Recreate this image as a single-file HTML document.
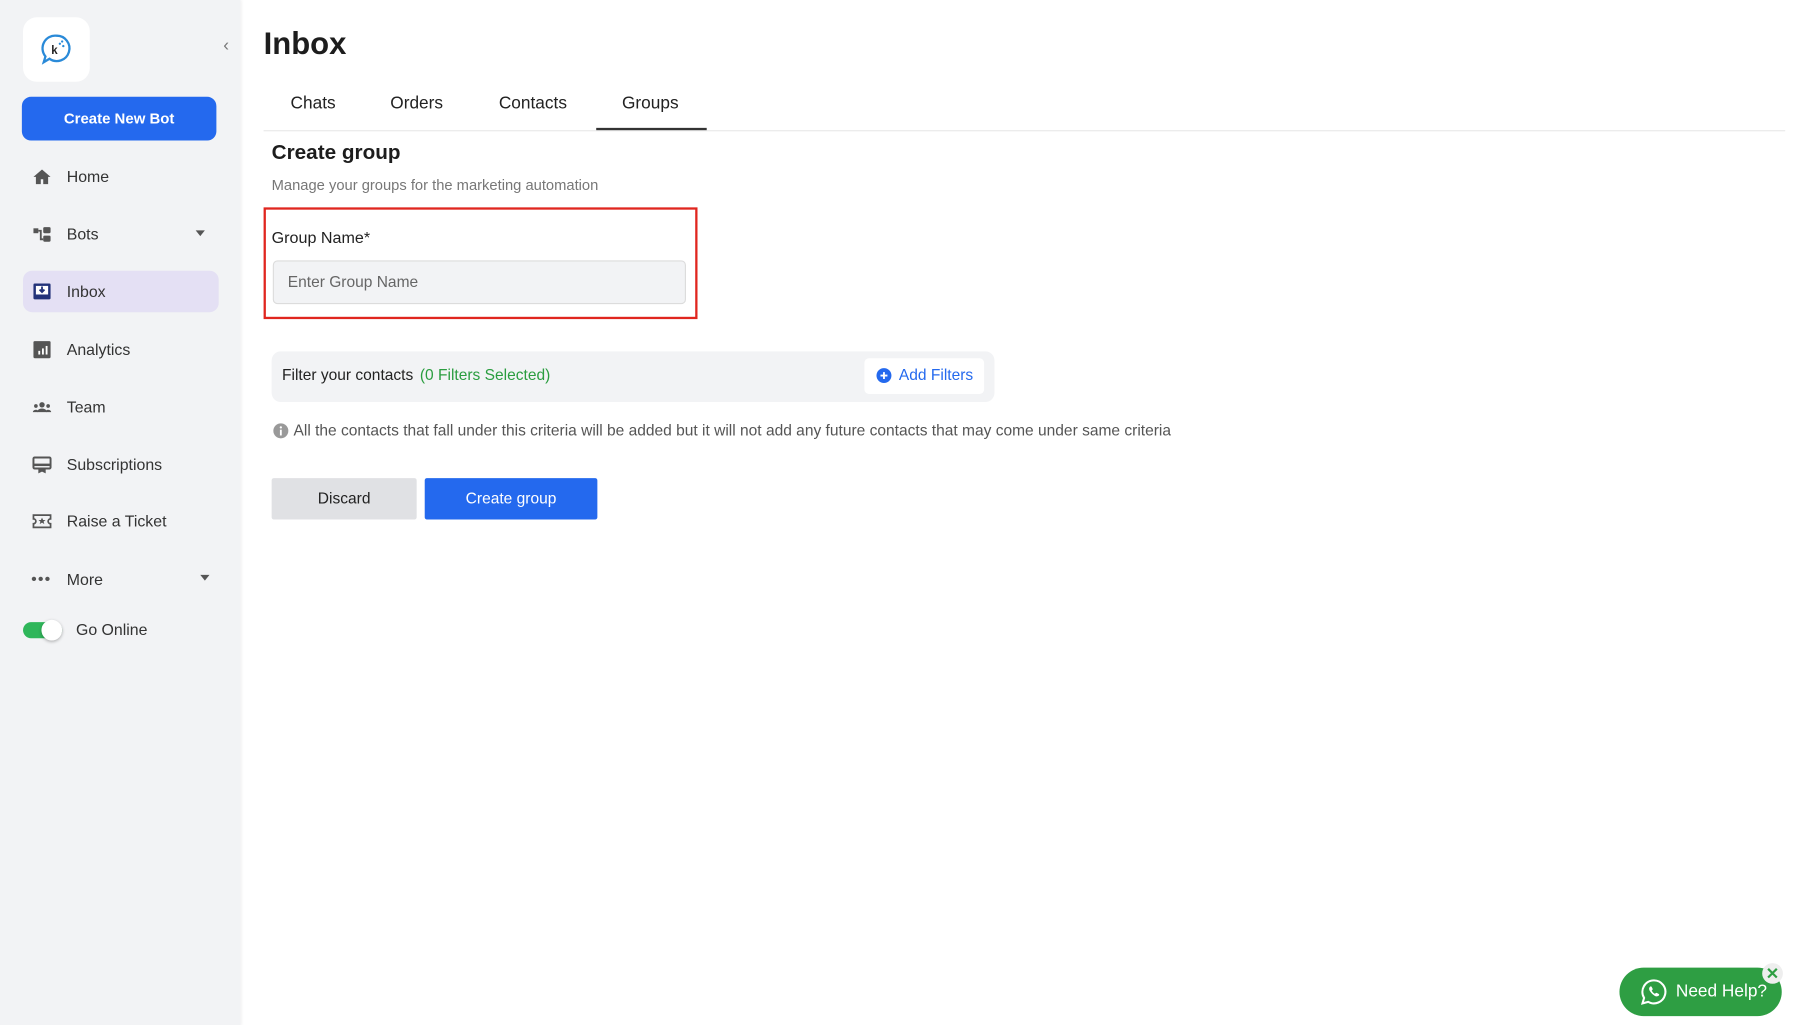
<!DOCTYPE html>
<html><head><meta charset="utf-8"><style>
*{box-sizing:border-box;margin:0;padding:0}
html,body{width:1806px;height:1020px;overflow:hidden;background:#fff;font-family:"Liberation Sans",sans-serif}
#w{position:absolute;left:0;top:0;width:1570px;height:884px;transform:scale(1.151,1.152);transform-origin:0 0}
.a{position:absolute}
.side{left:0;top:0;width:209px;height:890px;background:#f2f3f5;box-shadow:1px 0 3px rgba(0,0,0,.08)}
.nav{position:absolute;left:58px;font-size:13.8px;color:#333;line-height:16px}
.ic{position:absolute;left:28px;width:17px;height:17px}
.tab{position:absolute;top:81px;font-size:15px;color:#222;transform:translateX(-50%)}
</style></head><body><div id="w">
<div class="a side">
 <div class="a" style="left:20px;top:15px;width:58px;height:56px;background:#fff;border-radius:12px"></div>
 <svg class="a" style="left:34px;top:27px" width="30" height="30" viewBox="0 0 30 30"><path d="M15 4a11 11 0 1 1-6 20l-5 3 1.5-5A11 11 0 0 1 15 4z" fill="none" stroke="#2a8ad8" stroke-width="2"/><text x="10.5" y="20" font-size="10" font-weight="bold" font-family="Liberation Sans" fill="#222">k</text><circle cx="18" cy="11" r="1" fill="#2a8ad8"/><circle cx="21" cy="13" r="1" fill="#2a8ad8"/><circle cx="20" cy="9" r="1" fill="#2a8ad8"/></svg>
 <div class="a" style="left:194px;top:31px;color:#777;font-size:15px">&#8249;</div>
 <div class="a" style="left:19px;top:84px;width:169px;height:38px;background:#2469ee;border-radius:8px;color:#fff;font-weight:bold;font-size:13px;text-align:center;line-height:38px">Create New Bot</div>
 <div class="a" style="left:20px;top:235px;width:170px;height:36px;background:#e4e0f4;border-radius:8px"></div>
 <svg class="ic" style="top:145px" viewBox="0 0 16 16"><path d="M8 2 1 8h2v6h4v-4h2v4h4V8h2z" fill="#555"/></svg><div class="nav" style="top:146px">Home</div>
 <svg class="ic" style="top:195px" viewBox="0 0 16 16"><rect x="1" y="3" width="4" height="4" fill="#555"/><rect x="9" y="2" width="6" height="5" rx="1" fill="#555"/><rect x="9" y="9" width="6" height="5" rx="1" fill="#555"/><path d="M5 5h2v7h2" stroke="#555" stroke-width="1.5" fill="none"/></svg><div class="nav" style="top:196px">Bots</div>
 <div class="a" style="left:170px;top:200px;border:4px solid transparent;border-top:5px solid #555"></div>
 <svg class="ic" style="top:245px" viewBox="0 0 16 16"><rect x="1" y="1" width="14" height="13" rx="1" fill="#23337a"/><rect x="3" y="3" width="10" height="7" fill="#fff"/><path d="M8 3.5v4M6 6l2 2 2-2" stroke="#23337a" stroke-width="1.5" fill="none"/></svg><div class="nav" style="top:246px">Inbox</div>
 <svg class="ic" style="top:295px" viewBox="0 0 16 16"><rect x="1" y="1" width="14" height="14" rx="1" fill="#555"/><rect x="5" y="9" width="1.5" height="3" fill="#fff"/><rect x="8" y="7" width="1.5" height="5" fill="#fff"/><rect x="11" y="5" width="1.5" height="7" fill="#fff"/></svg><div class="nav" style="top:296px">Analytics</div>
 <svg class="ic" style="top:345px" viewBox="0 0 16 16"><circle cx="8" cy="6" r="2.2" fill="#555"/><path d="M4 12a4 3 0 0 1 8 0z" fill="#555"/><circle cx="3" cy="7" r="1.5" fill="#555"/><circle cx="13" cy="7" r="1.5" fill="#555"/><path d="M0.5 12a2.5 2 0 0 1 4 -1.5v1.5zM15.5 12a2.5 2 0 0 0-4-1.5v1.5z" fill="#555"/></svg><div class="nav" style="top:346px">Team</div>
 <svg class="ic" style="top:395px" viewBox="0 0 16 16"><rect x="1" y="2" width="14" height="9" rx="1" fill="none" stroke="#555" stroke-width="1.6"/><rect x="1" y="7" width="14" height="2" fill="#555"/><path d="M5 11v4l3-1.5 3 1.5v-4" fill="#555"/></svg><div class="nav" style="top:396px">Subscriptions</div>
 <svg class="ic" style="top:444px" viewBox="0 0 16 16"><path d="M1 3h14v3a2 2 0 0 0 0 4v3H1v-3a2 2 0 0 0 0-4z" fill="none" stroke="#555" stroke-width="1.4"/><path d="M8 5l.9 2h2l-1.6 1.3.6 2L8 9.1 6.1 10.3l.6-2L5.1 7h2z" fill="#555"/></svg><div class="nav" style="top:445px">Raise a Ticket</div>
 <div class="a" style="left:27px;top:494px;font-size:14px;color:#555;letter-spacing:1px">&#8226;&#8226;&#8226;</div><div class="nav" style="top:496px">More</div>
 <div class="a" style="left:174px;top:499px;border:4px solid transparent;border-top:5px solid #555"></div>
 <div class="a" style="left:20px;top:540px;width:34px;height:14px;border-radius:7px;background:#2fb65a"></div>
 <div class="a" style="left:36px;top:538px;width:18px;height:18px;border-radius:50%;background:#fff;box-shadow:0 1px 3px rgba(0,0,0,.3)"></div>
 <div class="nav" style="left:66px;top:539px">Go Online</div>
</div>
<div class="a" style="left:229px;top:23px;font-size:27px;font-weight:bold;color:#1d1d1d">Inbox</div>
<div class="tab" style="left:272px">Chats</div><div class="tab" style="left:362px">Orders</div><div class="tab" style="left:463px">Contacts</div><div class="tab" style="left:565px">Groups</div>
<div class="a" style="left:229px;top:113px;width:1322px;height:1px;background:#e8e8e8"></div>
<div class="a" style="left:518px;top:111px;width:96px;height:2px;background:#333"></div>
<div class="a" style="left:236px;top:122px;font-size:18px;font-weight:bold;color:#1d1d1d">Create group</div>
<div class="a" style="left:236px;top:153px;font-size:12.8px;color:#777">Manage your groups for the marketing automation</div>
<div class="a" style="left:229px;top:180px;width:377px;height:97px;border:2px solid #e0261f"></div>
<div class="a" style="left:236px;top:198px;font-size:14px;color:#222">Group Name*</div>
<div class="a" style="left:237px;top:226px;width:359px;height:38px;background:#f2f3f5;border:1px solid #dcdcdc;border-radius:4px;padding-left:12px;line-height:36px;font-size:13.5px;color:#666">Enter Group Name</div>
<div class="a" style="left:236px;top:305px;width:628px;height:44px;background:#f2f3f5;border-radius:8px"></div>
<div class="a" style="left:245px;top:318px;font-size:13.5px;color:#222">Filter your contacts <span style="color:#2a9d3f;margin-left:2px">(0 Filters Selected)</span></div>
<div class="a" style="left:751px;top:311px;width:104px;height:31px;background:#fff;border-radius:4px"></div>
<svg class="a" style="left:761px;top:319px" width="14" height="14" viewBox="0 0 14 14"><circle cx="7" cy="7" r="6.5" fill="#2469ee"/><path d="M7 4v6M4 7h6" stroke="#fff" stroke-width="1.6"/></svg>
<div class="a" style="left:781px;top:318px;font-size:13.5px;color:#2469ee">Add Filters</div>
<svg class="a" style="left:237px;top:367px" width="14" height="14" viewBox="0 0 14 14"><circle cx="7" cy="7" r="6.5" fill="#999"/><rect x="6.2" y="6" width="1.6" height="5" fill="#fff"/><circle cx="7" cy="4" r="1" fill="#fff"/></svg>
<div class="a" style="left:255px;top:366px;font-size:13.5px;color:#555">All the contacts that fall under this criteria will be added but it will not add any future contacts that may come under same criteria</div>
<div class="a" style="left:236px;top:415px;width:126px;height:36px;background:#e0e1e4;border-radius:2px;text-align:center;line-height:36px;font-size:13.5px;color:#222">Discard</div>
<div class="a" style="left:369px;top:415px;width:150px;height:36px;background:#2469ee;border-radius:2px;text-align:center;line-height:36px;font-size:13.5px;color:#fff">Create group</div>
<div class="a" style="left:1407px;top:840px;width:141px;height:42px;background:#2e9e43;border-radius:21px"></div>
<svg class="a" style="left:1425px;top:849px" width="24" height="24" viewBox="0 0 24 24"><path d="M12 2a10 10 0 1 1-5 18.7L2 22l1.4-4.8A10 10 0 0 1 12 2z" fill="none" stroke="#fff" stroke-width="1.8"/><path d="M8.5 7.5c.5-.5 1.2-.4 1.5.2l.8 1.6c.2.4 0 .8-.3 1.1l-.5.4c.6 1.3 1.6 2.3 2.9 2.9l.4-.5c.3-.3.7-.5 1.1-.3l1.6.8c.6.3.7 1 .2 1.5-1 1-2.5 1-4-.1a11 11 0 0 1-3.6-3.6c-1.1-1.5-1.1-3-.1-4z" fill="#fff"/></svg>
<div class="a" style="left:1456px;top:852px;font-size:15px;color:#fff">Need Help?</div>
<div class="a" style="left:1531px;top:836px;width:18px;height:18px;border-radius:50%;background:#eee;color:#2e9e43;font-size:14px;font-weight:bold;text-align:center;line-height:18px">&#10005;</div>
</div></body></html>
